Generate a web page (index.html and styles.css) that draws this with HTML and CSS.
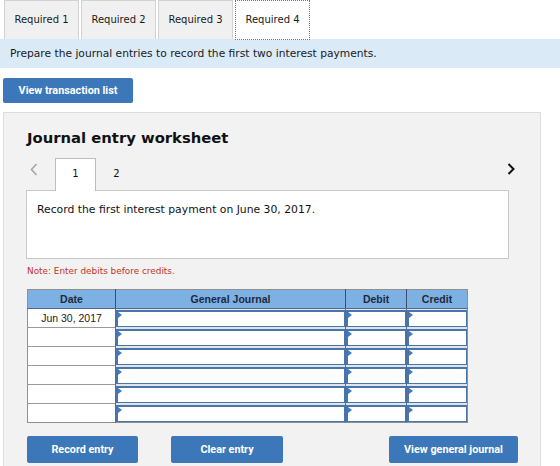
FILE: index.html
```html
<!DOCTYPE html>
<html lang="en">
<head>
  <meta charset="UTF-8">
  <title>Journal entry worksheet</title>
  <link rel="stylesheet" href="styles.css">
</head>
<body>
  <div class="req-tabs">
    <div class="req-tab">Required 1</div>
    <div class="req-tab">Required 2</div>
    <div class="req-tab">Required 3</div>
    <div class="req-tab active">Required 4</div>
  </div>
  <div class="prompt">Prepare the journal entries to record the first two interest payments.</div>
  <button class="btn btn-list">View transaction list</button>

  <div class="worksheet">
    <h2 class="ws-title">Journal entry worksheet</h2>
    <div class="ws-nav">
      <span class="arrow prev">
        <svg width="8" height="13" viewBox="0 0 8 13"><path d="M6.5 1 L1.5 6.5 L6.5 12" fill="none" stroke="#a6a6a6" stroke-width="1.6"/></svg>
      </span>
      <div class="step active">1</div>
      <div class="step">2</div>
      <span class="arrow next">
        <svg width="8" height="12" viewBox="0 0 8 12"><path d="M1.5 1 L6.5 6 L1.5 11" fill="none" stroke="#111" stroke-width="2"/></svg>
      </span>
    </div>
    <div class="ws-text">Record the first interest payment on June 30, 2017.</div>
    <p class="note">Note: Enter debits before credits.</p>

    <table class="journal">
      <thead>
        <tr>
          <th class="c-date">Date</th>
          <th class="c-gj">General Journal</th>
          <th class="c-amt">Debit</th>
          <th class="c-amt">Credit</th>
        </tr>
      </thead>
      <tbody>
        <tr>
          <td class="date">Jun 30, 2017</td>
          <td class="inp"><div class="field"></div></td>
          <td class="inp"><div class="field"></div></td>
          <td class="inp"><div class="field"></div></td>
        </tr>
        <tr>
          <td class="date"></td>
          <td class="inp"><div class="field"></div></td>
          <td class="inp"><div class="field"></div></td>
          <td class="inp"><div class="field"></div></td>
        </tr>
        <tr>
          <td class="date"></td>
          <td class="inp"><div class="field"></div></td>
          <td class="inp"><div class="field"></div></td>
          <td class="inp"><div class="field"></div></td>
        </tr>
        <tr>
          <td class="date"></td>
          <td class="inp"><div class="field"></div></td>
          <td class="inp"><div class="field"></div></td>
          <td class="inp"><div class="field"></div></td>
        </tr>
        <tr>
          <td class="date"></td>
          <td class="inp"><div class="field"></div></td>
          <td class="inp"><div class="field"></div></td>
          <td class="inp"><div class="field"></div></td>
        </tr>
        <tr>
          <td class="date"></td>
          <td class="inp"><div class="field"></div></td>
          <td class="inp"><div class="field"></div></td>
          <td class="inp"><div class="field"></div></td>
        </tr>
      </tbody>
    </table>

    <div class="ws-actions">
      <button class="btn btn-record">Record entry</button>
      <button class="btn btn-clear">Clear entry</button>
      <button class="btn btn-view">View general journal</button>
    </div>
  </div>
</body>
</html>
```

FILE: styles.css
```css
body {
  margin: 0;
  font-family: "DejaVu Sans", Verdana, sans-serif;
  color: #111;
  background: #fff;
  width: 560px;
  height: 466px;
  overflow: hidden;
}

/* top requirement tabs */
.req-tabs {
  display: flex;
  gap: 2px;
  padding-left: 4px;
  height: 39px;
}

.req-tab {
  width: 73px;
  height: 38px;
  border: 1px solid #d2d2d2;
  border-bottom: none;
  background: #f0f0f0;
  font-size: 10px;
  line-height: 38px;
  text-align: center;
  color: #1a1a1a;
}

.req-tab.active {
  background: #fff;
  border: 1px dotted #4a7fc0;
  height: 38px;
}

.prompt {
  height: 29px;
  line-height: 29px;
  padding-left: 10px;
  background: #dbeaf7;
  font-size: 10.7px;
  color: #1a1a1a;
}

.btn {
  border: none;
  border-radius: 2px;
  background: #3c77b9;
  color: #fff;
  font-family: Roboto, "Liberation Sans", sans-serif;
  font-weight: bold;
  font-size: 10.8px;
  cursor: pointer;
  padding: 0;
}

.btn-list {
  display: block;
  margin: 10px 0 0 3px;
  width: 130px;
  height: 25px;
}

/* worksheet panel */
.worksheet {
  margin: 9px 0 0 3px;
  width: 538px;
  height: 354px;
  border: 1px solid #dcdcdc;
  border-bottom: none;
  background: #f2f2f2;
  padding: 0 0 0 22px;
  box-sizing: border-box;
}

.ws-title {
  margin: 15px 0 0 1px;
  font-size: 14.8px;
  line-height: 20px;
  font-weight: bold;
}

.ws-nav {
  display: flex;
  align-items: flex-end;
  height: 32px;
  margin-top: 10px;
  width: 483px;
}

.arrow {
  display: flex;
  align-items: center;
  height: 32px;
}

.arrow.prev {
  width: 29px;
  padding-left: 4px;
  margin-bottom: 5px;
  box-sizing: border-box;
}

.arrow.next {
  margin-left: auto;
  margin-right: -6px;
  margin-bottom: 5px;
}

.step {
  width: 41px;
  height: 32px;
  line-height: 30px;
  text-align: center;
  font-size: 10px;
  margin-bottom: -1px;
  box-sizing: border-box;
  position: relative;
}

.step.active {
  background: #fff;
  border: 1px solid #bdbdbd;
  border-bottom: none;
  height: 33px;
  z-index: 1;
}

.ws-text {
  width: 483px;
  height: 69px;
  box-sizing: border-box;
  border: 1px solid #c8c8c8;
  background: #fff;
  padding: 12px 0 0 10px;
  font-size: 10.8px;
}

.note {
  margin: 6px 0 0 1px;
  color: #c4312b;
  font-size: 8.9px;
  line-height: 12px;
}

/* journal table */
.journal {
  margin: 12px 0 0 1px;
  border-collapse: collapse;
  font-family: "Liberation Sans", Arial, sans-serif;
  font-size: 10.5px;
  border: 1px solid #8f8f8f;
}

.journal th {
  height: 19px;
  padding: 0;
  background: #7db0e3;
  font-weight: bold;
  color: #1e2a3a;
  border-left: 1px solid #3d4f66;
  border-bottom: 1px solid #4f6a8c;
  box-sizing: border-box;
}

.journal th:first-child {
  border-left: none;
}

.c-date { width: 88px; }
.c-gj { width: 230px; }
.c-amt { width: 61px; }

.journal tbody tr {
  height: 19px;
}

.journal td {
  height: 18px;
  padding: 0;
  box-sizing: border-box;
}

.journal td.date {
  background: #fff;
  text-align: center;
  color: #222;
  border-top: 1px solid #9a9a9a;
  border-right: 1px solid #4b6f9e;
}

.journal tbody tr:first-child td.date {
  border-top: none;
}

.journal td.inp {
  background: #dfe4ea;
  border-left: 1px solid #4b6f9e;
  vertical-align: top;
}

.field {
  position: relative;
  height: 14px;
  margin-top: 1px;
  background: #fff;
  border: 1px solid #4975ab;
  border-top-width: 2px;
  border-left-width: 2px;
}

.field::before {
  content: "";
  position: absolute;
  left: 0;
  top: 0;
  border-top: 3px solid transparent;
  border-bottom: 3px solid transparent;
  border-left: 4px solid #3f7bc4;
}

.ws-actions {
  display: flex;
  margin: 13px 0 0 1px;
  width: 491px;
}

.ws-actions .btn {
  height: 27px;
  border-radius: 2px;
}

.btn-record { width: 111px; }
.btn-clear { width: 112px; margin-left: 33px; }
.btn-view { width: 129px; margin-left: auto; }
```
